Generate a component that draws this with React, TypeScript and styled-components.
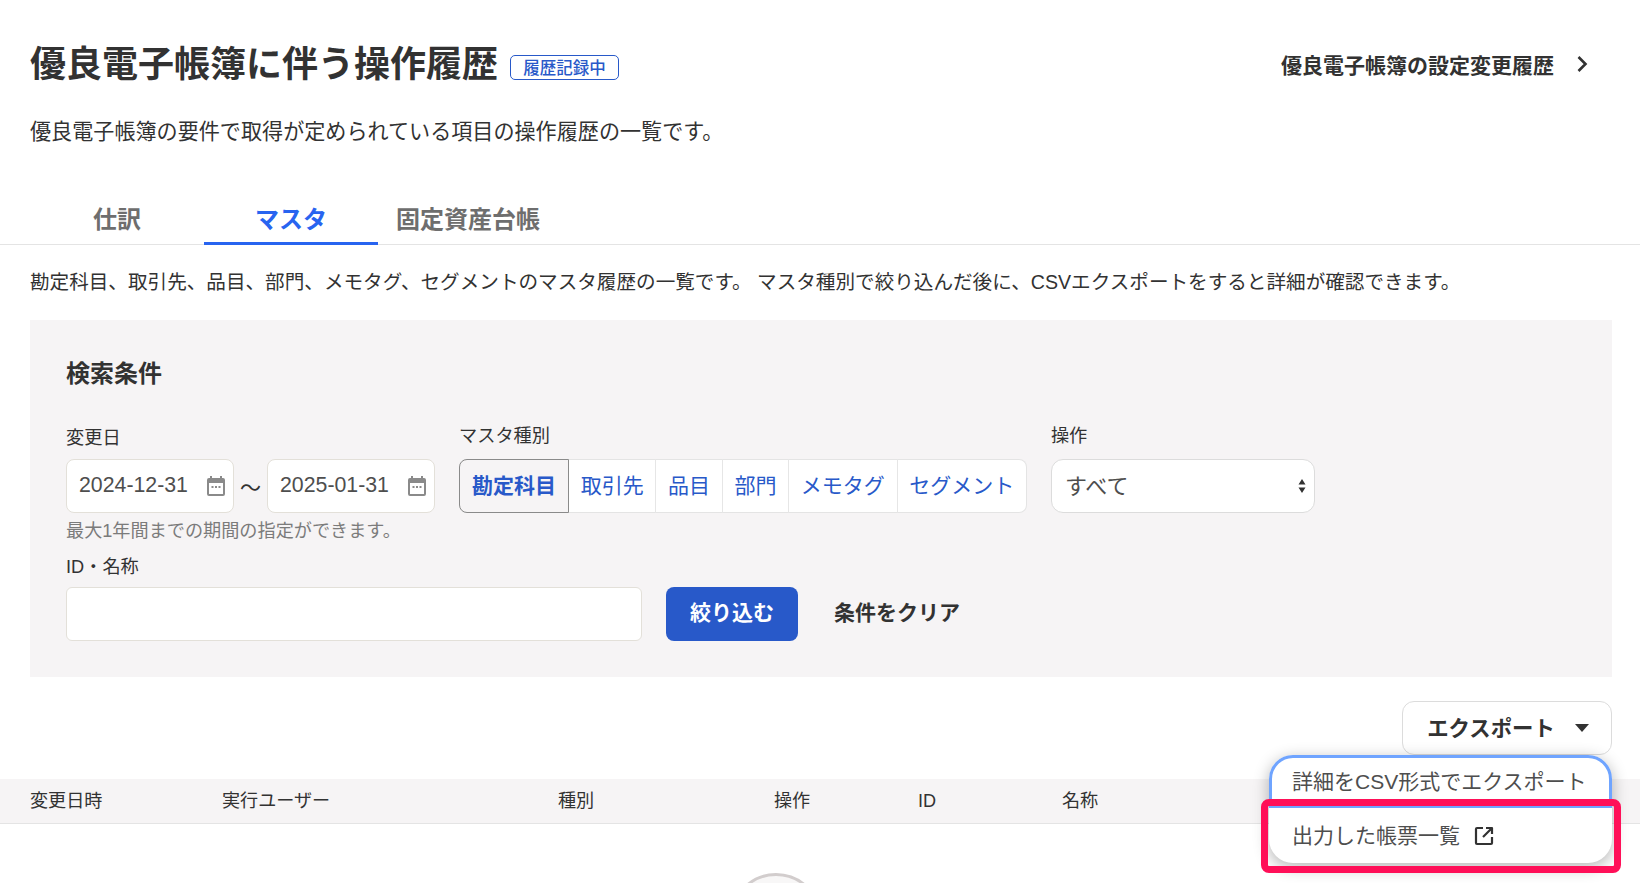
import React from "react";
import styled, { createGlobalStyle } from "styled-components";

const FONT = `"Liberation Sans", "Noto Sans CJK JP", sans-serif`;

const Global = createGlobalStyle`
  html, body { margin: 0; padding: 0; height: 883px; overflow: hidden; background: #fff; }
  body { font-family: ${FONT}; color: #323232; }
  * { box-sizing: border-box; }
`;
const Page = styled.div`position: relative; width: 1640px; height: 883px; overflow: hidden;`;
const Header = styled.header`display: flex; align-items: center; justify-content: space-between; padding: 40px 28px 0 30px; height: 88px;`;
const TitleWrap = styled.div`display: flex; align-items: center; gap: 12px;`;
const Title = styled.h1`margin: 2px 0 0; font-size: 36px; line-height: 48px; font-weight: 700; color: #323232;`;
const Badge = styled.span`display: inline-flex; align-items: center; justify-content: center; width: 109px; height: 25px; margin-top: 6px; border: 1px solid #2859c9; border-radius: 5px; color: #2859c9; font-size: 16.5px; font-weight: 500; background: #fff;`;
const HistoryLink = styled.a`display: flex; align-items: center; gap: 22px; padding-right: 24px; font-size: 21px; font-weight: 700; color: #323232;`;
const Lead = styled.p`margin: 28px 0 0 30px; font-size: 21.1px; line-height: 32px; color: #323232;`;
const Tabs = styled.nav`display: flex; align-items: flex-end; height: 62px; margin-top: 35px; padding-left: 30px; border-bottom: 1px solid #e4e4e4;`;
const Tab = styled.button<{ $active?: boolean }>`
  width: 174px; height: 62px; margin-bottom: -1px; padding: 9px 0 0; background: none; border: 0;
  border-bottom: 3px solid ${p => (p.$active ? "#2864f0" : "transparent")};
  color: ${p => (p.$active ? "#2864f0" : "#6e6e6e")}; font: 700 24px ${FONT};
  &:last-child { padding-left: 6px; }
`;
const Desc = styled.p`margin: 22px 0 0 30px; font-size: 19.6px; line-height: 30px; color: #323232; white-space: nowrap;`;
const Panel = styled.section`margin: 23px 28px 0 30px; height: 357px; padding: 38px 36px 0; background: #f6f4f5;`;
const Heading = styled.h2`margin: 0; font-size: 24px; line-height: 32px; font-weight: 700;`;
const FormRow = styled.div`display: flex; align-items: flex-start; gap: 24px; margin-top: 33px;`;
const Field = styled.div`display: flex; flex-direction: column;`;
const Label = styled.label<{ $low?: boolean }>`display: block; font-size: 18.2px; line-height: 26px; margin-top: ${p => (p.$low ? "2px" : "0")}; margin-bottom: ${p => (p.$low ? "8px" : "10px")}; color: #323232;`;
const SearchLabel = styled(Label)`margin-top: 11px; margin-bottom: 7px;`;
const DateRow = styled.div`display: flex; align-items: center; gap: 6px;`;
const Wave = styled.span`font-size: 21px; color: #323232;`;
const DateBox = styled.div`display: flex; align-items: center; justify-content: space-between; width: 168px; height: 54px; padding: 0 5px 0 12px; background: #fff; border: 1px solid #e3e0d9; border-radius: 8px; font: 400 21.3px ${FONT}; color: #4e4e4e;`;
const DateText = styled.span`margin-bottom: 2px;`;
const Segments = styled.div`display: flex; height: 54px; background: #fff; border: 1px solid #e4e4e4; border-left: 0; border-radius: 8px;`;
const Segment = styled.button<{ $active?: boolean }>`
  height: 54px; margin-top: -1px; padding: 0 ${p => (p.$active ? "12px" : "11.7px")} 4px; background: ${p => (p.$active ? "#f6f4f5" : "transparent")};
  border: ${p => (p.$active ? "1px solid #8a8a8a" : "0")}; border-left: ${p => (p.$active ? "1px solid #8a8a8a" : "1px solid #e6e6e6")};
  border-radius: ${p => (p.$active ? "8px 0 0 8px" : "0")};
  color: #2859c9; font: ${p => (p.$active ? 700 : 400)} 21px ${FONT}; white-space: nowrap;
  &:nth-child(2) { border-left: 0; }
`;
const SelectBox = styled.div`position: relative; display: flex; align-items: center; width: 264px; height: 54px; padding: 0 0 4px 13px; background: #fff; border: 1px solid #dcdcdc; border-radius: 12px; font-size: 22px; color: #4e4e4e;`;
const Spinner = styled.svg`position: absolute; right: 8px; top: 19px;`;
const Hint = styled.p`margin: 6px 0 0; font-size: 18.15px; line-height: 24px; color: #7b7b7b;`;
const SearchRow = styled.div`display: flex; align-items: center;`;
const TextBox = styled.div`width: 576px; height: 54px; background: #fff; border: 1px solid #e3e0d9; border-radius: 6px;`;
const PrimaryButton = styled.button`width: 132px; height: 54px; margin-left: 24px; padding: 0 0 6px; background: #2859c9; color: #fff; border: 0; border-radius: 8px; font: 700 21px ${FONT};`;
const TextButton = styled.button`margin-left: 36px; padding: 0 0 6px; background: none; border: 0; color: #323232; font: 700 21px ${FONT};`;
const ExportRow = styled.div`display: flex; justify-content: flex-end; margin: 24px 28px 0 0;`;
const ExportButton = styled.button`display: flex; align-items: center; justify-content: center; gap: 20px; width: 210px; height: 54px; padding: 0 0 4px 2px; background: #fff; border: 1px solid #dcdcdc; border-radius: 12px; color: #323232; font: 700 21.4px ${FONT};`;
const Caret = styled.svg`margin-top: 4px;`;
const TableHead = styled.div`display: grid; grid-template-columns: 192px 336px 216px 144px 144px 1fr; align-items: center; height: 45px; margin-top: 24px; padding: 0 0 0 30px; background: #f6f4f5; border-bottom: 1px solid #e4e4e4; font-size: 18.1px; line-height: 24px; color: #323232;`;
const Menu = styled.div`position: absolute; left: 1269px; top: 755px; width: 343px; height: 108px; background: #fff; border-radius: 24px; box-shadow: 0 4px 16px rgba(0,0,0,.3);`;
const MenuItem = styled.div<{ $focus?: boolean }>`
  display: flex; align-items: center; gap: 14px; height: ${p => (p.$focus ? "53px" : "55px")}; padding: 0 0 3px ${p => (p.$focus ? "20px" : "23px")};
  font-size: 21px; color: #4e4e4e; white-space: nowrap;
  ${p => p.$focus ? "border: 3px solid #6fa4ff; border-radius: 24px 24px 0 0;" : ""}
`;
const ExternalIcon = styled.svg`margin-top: 3px;`;
const Highlight = styled.div`position: absolute; left: 1261px; top: 799px; width: 360px; height: 74px; border: 7px solid #ff0f58; border-radius: 8px;`;
const LoadingRing = styled.div`position: absolute; left: 730px; top: 873px; width: 92px; height: 92px; border: 3px solid #d2cdcd; border-radius: 50%; background: #f8f7f7;`;

const Cal = () => (
  <svg width="24" height="24" viewBox="0 0 24 24" fill="#8a8a8a">
    <path d="M6 2h2v2h8V2h2v2h1a2 2 0 0 1 2 2v14a2 2 0 0 1-2 2H5a2 2 0 0 1-2-2V6a2 2 0 0 1 2-2h1zM5 9v11h14V9z" />
    <rect x="7.5" y="12" width="2" height="2" /><rect x="11" y="12" width="2" height="2" /><rect x="14.5" y="12" width="2" height="2" />
  </svg>
);

export default function App() {
  return (
    <Page>
      <Global />
      <Header>
        <TitleWrap><Title>優良電子帳簿に伴う操作履歴</Title><Badge>履歴記録中</Badge></TitleWrap>
        <HistoryLink>優良電子帳簿の設定変更履歴
          <svg width="12" height="18" viewBox="0 0 12 18" fill="none" stroke="#323232" strokeWidth="2.6"><path d="M2.5 2l7 7-7 7" /></svg>
        </HistoryLink>
      </Header>
      <Lead>優良電子帳簿の要件で取得が定められている項目の操作履歴の一覧です。</Lead>
      <Tabs><Tab>仕訳</Tab><Tab $active>マスタ</Tab><Tab>固定資産台帳</Tab></Tabs>
      <Desc>勘定科目、取引先、品目、部門、メモタグ、セグメントのマスタ履歴の一覧です。 マスタ種別で絞り込んだ後に、CSVエクスポートをすると詳細が確認できます。</Desc>
      <Panel>
        <Heading>検索条件</Heading>
        <FormRow>
          <Field>
            <Label $low>変更日</Label>
            <DateRow>
              <DateBox><DateText>2024-12-31</DateText><Cal /></DateBox><Wave>〜</Wave><DateBox><DateText>2025-01-31</DateText><Cal /></DateBox>
            </DateRow>
            <Hint>最大1年間までの期間の指定ができます。</Hint>
          </Field>
          <Field>
            <Label>マスタ種別</Label>
            <Segments>
              <Segment $active>勘定科目</Segment><Segment>取引先</Segment><Segment>品目</Segment><Segment>部門</Segment><Segment>メモタグ</Segment><Segment>セグメント</Segment>
            </Segments>
          </Field>
          <Field>
            <Label>操作</Label>
            <SelectBox>すべて
              <Spinner width="8" height="14" viewBox="0 0 8 14" fill="#323232"><path d="M4 0l3.5 5.5h-7zM4 14L.5 8.5h7z" /></Spinner>
            </SelectBox>
          </Field>
        </FormRow>
        <SearchLabel>ID・名称</SearchLabel>
        <SearchRow>
          <TextBox /><PrimaryButton>絞り込む</PrimaryButton><TextButton>条件をクリア</TextButton>
        </SearchRow>
      </Panel>
      <ExportRow>
        <ExportButton>エクスポート
          <Caret width="14" height="8" viewBox="0 0 14 8" fill="#323232"><path d="M0 0h14L7 8z" /></Caret>
        </ExportButton>
      </ExportRow>
      <TableHead><span>変更日時</span><span>実行ユーザー</span><span>種別</span><span>操作</span><span>ID</span><span>名称</span></TableHead>
      <LoadingRing />
      <Menu>
        <MenuItem $focus>詳細をCSV形式でエクスポート</MenuItem>
        <MenuItem>出力した帳票一覧
          <ExternalIcon width="20" height="20" viewBox="0 0 20 20" fill="none" stroke="#323232" strokeWidth="2.2" strokeLinejoin="round"><path d="M9 2H3a1 1 0 0 0-1 1v14a1 1 0 0 0 1 1h14a1 1 0 0 0 1-1v-6M12 2h6v6M18 2L9 11" /></ExternalIcon>
        </MenuItem>
      </Menu>
      <Highlight />
    </Page>
  );
}
